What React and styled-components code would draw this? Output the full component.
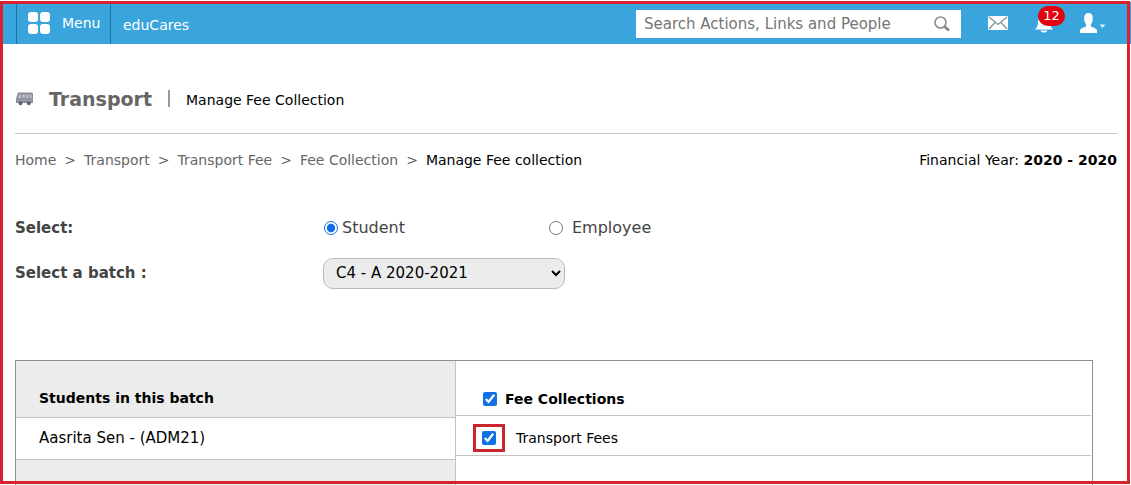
import React, { useState } from "react";
import styled, { createGlobalStyle } from "styled-components";

const GlobalStyle = createGlobalStyle`
  * { box-sizing: border-box; }
  body {
    margin: 0;
    background: #fff;
    color: #000;
    font-family: "DejaVu Sans", Verdana, sans-serif;
    font-size: 14px;
    line-height: 20px;
  }
  input, select, button { font-family: inherit; }
`;

const Page = styled.div`
  min-height: 100vh;
  display: flex;
  flex-direction: column;
  padding-top: 2px;
`;

const Frame = styled.div`
  position: fixed;
  inset: 1px 1px 1px 0;
  border: 3px solid #d8232e;
  pointer-events: none;
  z-index: 5;
`;

const TopBar = styled.header`
  display: flex;
  align-items: stretch;
  height: 42px;
  padding: 0 24px 0 16px;
  background: #3aa5dc;
  color: #fff;
`;

const MenuButton = styled.button`
  display: flex;
  align-items: center;
  gap: 11px;
  width: 95px;
  padding: 0 0 0 11px;
  border: 0;
  border-left: 1px solid #1f73a3;
  border-right: 1px solid #1f73a3;
  background: none;
  color: inherit;
  font-size: 14px;
`;

const Brand = styled.a`
  flex: 1;
  padding: 13px 0 0 12px;
  color: inherit;
  text-decoration: none;
`;

const SearchForm = styled.form`
  display: flex;
  align-items: center;
  width: 325px;
  height: 28px;
  margin: 8px 26px 0 0;
  padding: 0 8px;
  background: #fff;
`;

const SearchInput = styled.input`
  flex: 1;
  min-width: 0;
  padding: 0;
  border: 0;
  outline: 0;
  background: none;
  font-size: 15px;
  &::placeholder { color: #757575; opacity: 1; }
`;

const IconButton = styled.button`
  display: flex;
  align-items: center;
  padding: 0;
  border: 0;
  background: none;
  color: inherit;
`;

const Tools = styled.nav`
  display: flex;
  align-items: center;
  gap: 25px;
`;

const BellButton = styled(IconButton)`
  position: relative;
`;

const Badge = styled.span`
  position: absolute;
  left: 4px;
  top: -7px;
  width: 27px;
  height: 20px;
  border-radius: 10px;
  background: #e3000f;
  color: #fff;
  font-size: 13px;
  line-height: 20px;
  text-align: center;
`;

const Heading = styled.div`
  display: flex;
  align-items: center;
  gap: 16px;
  height: 90px;
  margin: 0 14px 0 15px;
  padding: 20px 0 0 1px;
  border-bottom: 1px solid #c8c8c8;
`;

const Title = styled.h1`
  margin: 0;
  color: #666;
  font-size: 19px;
  line-height: 24px;
`;

const Divider = styled.span`
  width: 2px;
  height: 17px;
  background: #999;
`;

const Subtitle = styled.h2`
  margin: 0;
  padding-top: 3px;
  font-size: 14px;
  font-weight: 400;
`;

const InfoRow = styled.div`
  display: flex;
  justify-content: space-between;
  margin: 16px 14px 0 15px;
`;

const Crumbs = styled.nav`
  display: flex;
  gap: 8px;
  color: #666;
  a { color: inherit; text-decoration: none; }
  strong { color: #000; font-weight: 400; }
`;

const Filters = styled.div`
  display: flex;
  flex-direction: column;
  gap: 13px;
  margin: 42px 15px 0;
`;

const Field = styled.div`
  display: flex;
  align-items: center;
  min-height: 32px;
`;

const FieldName = styled.label`
  width: 308px;
  color: #444;
  font-size: 15px;
  font-weight: 700;
`;

const Choice = styled.label`
  display: flex;
  align-items: center;
  gap: ${(p) => p.$gap}px;
  width: 225px;
  padding-left: 1px;
  color: #444;
  font-size: 16px;
`;

const Tick = styled.input`
  width: 14px;
  height: 14px;
  margin: 0;
  accent-color: #1070e4;
`;

const BatchSelect = styled.select`
  width: 242px;
  height: 31px;
  padding: 0 8px;
  border: 1px solid #b9b9b9;
  border-radius: 10px;
  background-color: #ececec;
  color: #000;
  font-size: 15px;
`;

const Panel = styled.main`
  flex: 1;
  display: flex;
  margin: 71px 38px 0 15px;
  border: 1px solid #8f8f8f;
  border-bottom: 0;
`;

const Students = styled.section`
  width: 440px;
  border-right: 1px solid #c4c4c4;
  background: #ececec;
`;

const StudentTable = styled.table`
  width: 100%;
  border-collapse: collapse;
  th, td {
    padding: 0 23px;
    border-bottom: 1px solid #c4c4c4;
    text-align: left;
  }
  th { height: 56px; padding-top: 18px; }
  td { height: 42px; background: #fff; font-size: 15px; }
`;

const Fees = styled.section`
  flex: 1;
  padding-right: 1px;
`;

const FeeRow = styled.label`
  display: flex;
  align-items: center;
  gap: ${(p) => (p.$head ? 8 : 11)}px;
  height: ${(p) => (p.$head ? 55 : 40)}px;
  padding: ${(p) => (p.$head ? "22px 0 0 27px" : "5px 0 0 17px")};
  border-bottom: 1px solid #c4c4c4;
  font-weight: ${(p) => (p.$head ? 700 : 400)};
`;

const Highlight = styled.span`
  display: flex;
  align-items: center;
  justify-content: center;
  width: 32px;
  height: 28px;
  border: 3px solid #c9252f;
`;

const MenuIcon = () => (
  <svg width="23" height="23" viewBox="0 0 23 23" fill="#fff" aria-hidden="true">
    <rect x="0" y="0" width="10" height="10" rx="3" />
    <rect x="12" y="0" width="10" height="10" rx="3" />
    <rect x="0" y="12" width="10" height="10" rx="3" />
    <rect x="12" y="12" width="10" height="10" rx="3" />
  </svg>
);

const SearchIcon = () => (
  <svg width="20" height="18" viewBox="0 0 20 18" fill="none" stroke="#8c8c8c" aria-hidden="true">
    <circle cx="7.500" cy="7.500" r="5.500" strokeWidth="1.600" />
    <path d="M11.500 11.500l4.500 4" strokeWidth="3" />
  </svg>
);

const MailIcon = () => (
  <svg width="22" height="16" viewBox="0 0 22 16" aria-hidden="true">
    <rect x="1" y="1" width="20" height="14" rx="1" fill="#fff" />
    <path d="M2 2l9 7.5L20 2M2 14l6-6.5M20 14l-6-6.5" fill="none" stroke="#7f969e" strokeWidth="1.3" />
  </svg>
);

const BellIcon = () => (
  <svg width="20" height="20" viewBox="0 0 20 20" fill="#fff" aria-hidden="true">
    <path d="M10 1c1 0 1.500.7 1.500 1.600C14.500 3.400 16 5.800 16 9c0 4 1 5.500 3 7.500H1C3 14.500 4 13 4 9c0-3.200 1.500-5.600 4.500-6.400C8.500 1.700 9 1 10 1z" />
    <path d="M6.500 17.500h7c-.8 1.600-2 2-3.500 2s-2.700-.4-3.500-2z" />
  </svg>
);

const UserIcon = () => (
  <svg width="28" height="22" viewBox="0 0 28 22" aria-hidden="true">
    <path
      d="M9.500 1c3 0 4.300 2 4.300 5.200 0 2.600-.6 4.600-1.800 5.800v2.600c2.500 1.200 6 1.800 6 4.400v2H1v-2c0-2.600 3.500-3.200 6-4.400V12C5.800 10.800 5.200 8.800 5.200 6.200 5.200 3 6.500 1 9.500 1z"
      fill="#fff"
    />
    <path d="M20.500 12.500h6l-3 3.500z" fill="#d6edf8" />
  </svg>
);

const BusIcon = () => (
  <svg width="17" height="14" viewBox="0 0 18 14" preserveAspectRatio="none" aria-hidden="true">
    <path d="M3.200.5H16c1.300 0 2 .6 2 1.800V11H0V7l1.500-5.300C1.800.8 2.300.5 3.200.5z" fill="#8d8d9b" />
    <path d="M3.200 2.500h2.300V6H2.200zM6.500 2.500h3V6h-3zM10.500 2.500h3V6h-3zM14.500 2.500h2.200V6h-2.200z" fill="#b9bcca" />
    <path d="M.5 8h17" stroke="#a9a9b6" />
    <circle cx="4.800" cy="11.200" r="2" fill="#62626e" />
    <circle cx="13.600" cy="11.200" r="2" fill="#62626e" />
  </svg>
);

const trail = ["Home", "Transport", "Transport Fee", "Fee Collection"];

export default function App() {
  const [kind, setKind] = useState("student");
  return (
    <Page>
      <GlobalStyle />
      <Frame />
      <TopBar>
        <MenuButton type="button"><MenuIcon />Menu</MenuButton>
        <Brand href="#">eduCares</Brand>
        <SearchForm role="search">
          <SearchInput type="text" aria-label="Search" placeholder="Search Actions, Links and People" />
          <IconButton type="button" aria-label="Search"><SearchIcon /></IconButton>
        </SearchForm>
        <Tools>
          <IconButton type="button" aria-label="Messages"><MailIcon /></IconButton>
          <BellButton type="button" aria-label="Notifications"><BellIcon /><Badge>12</Badge></BellButton>
          <IconButton type="button" aria-label="Account"><UserIcon /></IconButton>
        </Tools>
      </TopBar>

      <Heading>
        <BusIcon />
        <Title>Transport</Title>
        <Divider />
        <Subtitle>Manage Fee Collection</Subtitle>
      </Heading>

      <InfoRow>
        <Crumbs aria-label="Breadcrumb">
          {trail.map((name) => (
            <React.Fragment key={name}>
              <a href="#">{name}</a>
              <span>&gt;</span>
            </React.Fragment>
          ))}
          <strong>Manage Fee collection</strong>
        </Crumbs>
        <div>Financial Year: <b>2020 - 2020</b></div>
      </InfoRow>

      <Filters>
        <Field role="radiogroup" aria-labelledby="kind-label">
          <FieldName as="span" id="kind-label">Select:</FieldName>
          <Choice $gap={4}>
            <Tick type="radio" name="kind" checked={kind === "student"} onChange={() => setKind("student")} />
            Student
          </Choice>
          <Choice $gap={9}>
            <Tick type="radio" name="kind" checked={kind === "employee"} onChange={() => setKind("employee")} />
            Employee
          </Choice>
        </Field>
        <Field>
          <FieldName htmlFor="batch">Select a batch :</FieldName>
          <BatchSelect id="batch">
            <option>C4 - A 2020-2021</option>
          </BatchSelect>
        </Field>
      </Filters>

      <Panel>
        <Students>
          <StudentTable>
            <thead><tr><th scope="col">Students in this batch</th></tr></thead>
            <tbody><tr><td>Aasrita Sen - (ADM21)</td></tr></tbody>
          </StudentTable>
        </Students>
        <Fees>
          <FeeRow $head><Tick type="checkbox" defaultChecked />Fee Collections</FeeRow>
          <FeeRow>
            <Highlight><Tick type="checkbox" defaultChecked /></Highlight>
            Transport Fees
          </FeeRow>
        </Fees>
      </Panel>
    </Page>
  );
}
